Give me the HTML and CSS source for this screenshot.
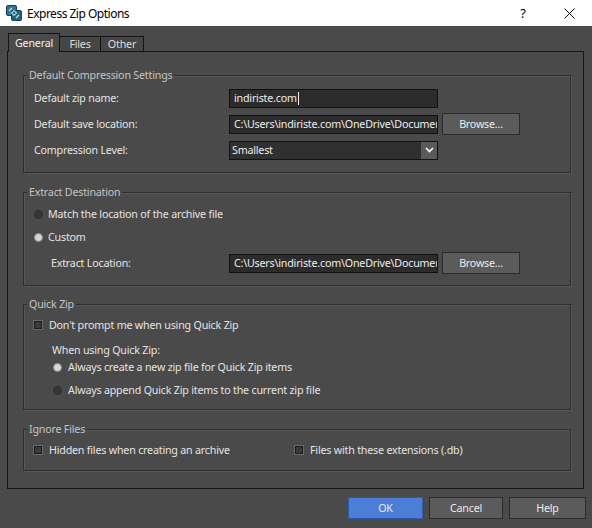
FILE: index.html
```html
<!DOCTYPE html>
<html lang="en">
<head>
    <meta charset="UTF-8">
    <title>Express Zip Options</title>
    <link rel="stylesheet" href="styles.css">
</head>
<body>

    <div class="titlebar">
        <svg class="app-icon" viewBox="0 0 16 16" width="16" height="16">
            <rect x="0.5" y="0.5" width="10" height="10" rx="1.5" fill="#2f7590" stroke="#1b3f50"/>
            <rect x="5.5" y="5.5" width="10" height="10" rx="1.5" fill="#23627c" stroke="#1b3f50"/>
            <path d="M3 6 L6 3 M10 13 L13 10" stroke="#b9dbe6" stroke-width="1.4"/>
            <path d="M5.5 8 L8 5.5 L10.5 8 L8 10.5 Z" fill="none" stroke="#9fd0e0" stroke-width="1.2"/>
        </svg>
        <span class="title">Express Zip Options</span>
        <span class="caption-btn help">?</span>
        <span class="caption-btn">
            <svg viewBox="0 0 11 11" width="11" height="11">
                <path d="M0.5 0.5 L10.5 10.5 M10.5 0.5 L0.5 10.5" stroke="#000" stroke-width="1"/>
            </svg>
        </span>
    </div>

    <div class="dialog">
        <div class="tabs">
            <div class="tab active">General</div>
            <div class="tab tab-files">Files</div>
            <div class="tab tab-other">Other</div>
        </div>

        <div class="panel">

            <fieldset class="group group-compression">
                <legend>Default Compression Settings</legend>
                <div class="field-row">
                    <span class="field-label">Default zip name:</span>
                    <div class="textbox">indiriste.com<span class="caret"></span></div>
                </div>
                <div class="field-row">
                    <span class="field-label">Default save location:</span>
                    <div class="textbox">C:\Users\indiriste.com\OneDrive\Documents</div>
                    <div class="btn browse">Browse...</div>
                </div>
                <div class="field-row">
                    <span class="field-label">Compression Level:</span>
                    <div class="textbox select">
                        <span class="select-value">Smallest</span>
                        <span class="select-arrow">
                            <svg viewBox="0 0 9 6" width="9" height="6">
                                <path d="M1 1 L4.5 4.5 L8 1" fill="none" stroke="#fff" stroke-width="1.6"/>
                            </svg>
                        </span>
                    </div>
                </div>
            </fieldset>

            <fieldset class="group group-extract">
                <legend>Extract Destination</legend>
                <div class="option-row">
                    <span class="radio"></span>
                    Match the location of the archive file
                </div>
                <div class="option-row second">
                    <span class="radio checked"></span>
                    Custom
                </div>
                <div class="field-row extract-row">
                    <span class="field-label">Extract Location:</span>
                    <div class="textbox">C:\Users\indiriste.com\OneDrive\Documents</div>
                    <div class="btn browse">Browse...</div>
                </div>
            </fieldset>

            <fieldset class="group group-quick">
                <legend>Quick Zip</legend>
                <div class="option-row">
                    <span class="checkbox"></span>
                    Don't prompt me when using Quick Zip
                </div>
                <div class="option-row sub-label">When using Quick Zip:</div>
                <div class="option-row sub-option">
                    <span class="radio checked"></span>
                    Always create a new zip file for Quick Zip items
                </div>
                <div class="option-row sub-option last">
                    <span class="radio"></span>
                    Always append Quick Zip items to the current zip file
                </div>
            </fieldset>

            <fieldset class="group group-ignore">
                <legend>Ignore Files</legend>
                <div class="ignore-row">
                    <div class="option-row hidden-files">
                        <span class="checkbox"></span>
                        Hidden files when creating an archive
                    </div>
                    <div class="option-row">
                        <span class="checkbox"></span>
                        Files with these extensions (.db)
                    </div>
                </div>
            </fieldset>

        </div>

        <div class="buttons">
            <div class="btn primary">OK</div>
            <div class="btn cancel">Cancel</div>
            <div class="btn help-btn">Help</div>
        </div>
    </div>

</body>
</html>
```

FILE: styles.css
```css
body {
    margin: 0;
    width: 592px;
    height: 528px;
    overflow: hidden;
    background: #4a4a4a;
    font-family: "Noto Sans", sans-serif;
    font-size: 10.7px;
    letter-spacing: -0.2px;
    color: #e4e4e4;
}

/* window caption */

.titlebar {
    height: 26px;
    background: #fff;
    color: #000;
    display: flex;
    align-items: center;
    font-size: 12px;
}

.app-icon {
    margin: 0 5px 0 6px;
}

.title {
    flex: 1;
    letter-spacing: -0.5px;
}

.caption-btn {
    width: 46px;
    height: 26px;
    display: flex;
    align-items: center;
    justify-content: center;
}

.caption-btn.help {
    font-size: 13px;
}

/* tabs */

.dialog {
    padding-top: 8px;
}

.tabs {
    display: flex;
    align-items: flex-end;
    height: 18px;
    margin: 0 0 -1px 8px;
    position: relative;
    z-index: 1;
}

.tab {
    box-sizing: border-box;
    height: 16px;
    line-height: 15px;
    border: 1px solid #141414;
    text-align: center;
    background: #464646;
    color: #dcdcdc;
}

.tab.active {
    width: 52px;
    height: 19px;
    line-height: 18px;
    border-bottom: none;
    background: #4a4a4a;
    color: #f2f2f2;
}

.tab-files {
    width: 42px;
    margin-left: -1px;
}

.tab-other {
    width: 44px;
    margin-left: -1px;
}

.panel {
    box-sizing: border-box;
    width: 577px;
    height: 438px;
    margin-left: 7px;
    border: 1px solid #141414;
    padding: 16px 12px 0 15px;
}

/* group boxes */

.group {
    margin: 0;
    min-width: 0;
    padding: 0 10px;
    border: 1px solid #2e2e2e;
    box-shadow: 1px 1px 0 #575757, inset 1px 1px 0 #575757;
}

.group legend {
    padding: 0 2px;
    margin-left: -7px;
    line-height: 14px;
    color: #c4c4c4;
    background: #4a4a4a;
}

.group-compression {
    padding-top: 5px;
    padding-bottom: 11px;
}

.group-extract {
    margin-top: 12px;
    padding-top: 6px;
    padding-bottom: 11px;
}

.group-quick {
    margin-top: 11px;
    padding-top: 5px;
    padding-bottom: 10px;
}

.group-ignore {
    margin-top: 12px;
    padding-top: 5px;
    padding-bottom: 11px;
}

.field-row {
    display: flex;
    align-items: center;
    height: 22px;
    margin-bottom: 4px;
}

.field-row:last-child {
    margin-bottom: 0;
}

.field-label {
    width: 195px;
    flex: none;
}

.textbox {
    box-sizing: border-box;
    width: 209px;
    height: 19px;
    line-height: 17px;
    padding-left: 4px;
    background: #2c2c2c;
    border: 1px solid #111;
    color: #ececec;
    white-space: nowrap;
    overflow: hidden;
}

.caret {
    display: inline-block;
    width: 1px;
    height: 13px;
    margin-left: 1px;
    vertical-align: -3px;
    background: #f0f0f0;
}

.select {
    display: flex;
    padding-left: 2px;
    background: #303030;
}

.select-value {
    flex: 1;
}

.select-arrow {
    width: 16px;
    display: flex;
    align-items: center;
    justify-content: center;
    background: #5a5a5a;
}

.btn {
    box-sizing: border-box;
    height: 22px;
    line-height: 20px;
    text-align: center;
    background: #5b5b5b;
    border: 1px solid #2b2b2b;
    color: #ececec;
}

.browse {
    width: 78px;
    margin-left: 4px;
}

.extract-row {
    margin-top: 6px;
}

.extract-row .field-label {
    width: 178px;
    margin-left: 17px;
}

/* radios and checkboxes */

.option-row {
    display: flex;
    align-items: center;
    height: 18px;
}

.option-row.second {
    margin-top: 5px;
}

.radio {
    box-sizing: border-box;
    width: 9px;
    height: 9px;
    margin-right: 5px;
    border-radius: 50%;
    background: #363636;
    border: 1px solid #2e2e2e;
}

.radio.checked {
    background: #d6d6d6;
    border-color: #8a8a8a;
}

.checkbox {
    box-sizing: border-box;
    width: 8px;
    height: 8px;
    margin-right: 7px;
    background: #3a3a3a;
    border: 1px solid #1c1c1c;
    box-shadow: 0 0 0 1px #6a6a6a;
}

.sub-label {
    height: 16px;
    margin: 8px 0 0 18px;
}

.sub-option {
    margin-left: 19px;
}

.sub-option .radio {
    margin-right: 6px;
}

.sub-option.last {
    margin-top: 5px;
}

.ignore-row {
    display: flex;
}

.hidden-files {
    width: 261px;
}

/* bottom buttons */

.buttons {
    display: flex;
    justify-content: flex-end;
    gap: 6px;
    margin-top: 8px;
    padding-right: 6px;
}

.buttons .btn {
    width: 75px;
}

.buttons .primary {
    background: #4b7ed6;
    border-color: #2f5aa8;
}

.buttons .cancel {
    width: 74px;
}

.buttons .help-btn {
    width: 77px;
}
```
